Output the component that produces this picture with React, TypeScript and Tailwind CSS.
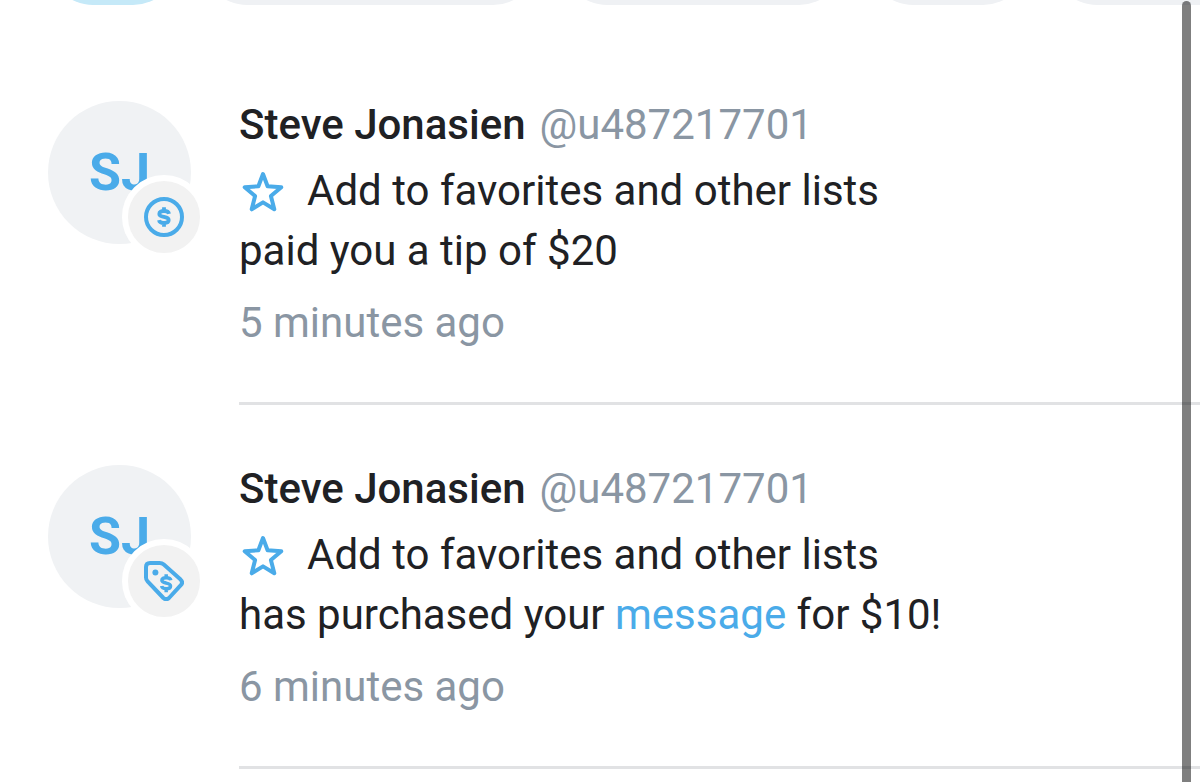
import { ReactNode } from 'react'

interface NotificationProps {
    id: number;
    name: string;
    user: string;
    initials: string;
    icon: ReactNode;
    message: ReactNode;
    time: string;
}

const filters = ['w-[130px] bg-[#c5e9f8]', 'w-[336px] bg-[#eff1f4]', 'w-[282px] bg-[#eff1f4]', 'w-[160px] bg-[#eff1f4]', 'w-[240px] bg-[#eff1f4]']

const dollarPath = 'M5 -3.2C4.6 -5.4 2.6 -6 0 -6C-2.8 -6 -4.7 -5 -4.7 -3.1C-4.7 -1 -2.5 -.6 0 -.1C2.5 .4 4.7 .9 4.7 3C4.7 5 2.8 6 0 6C-2.6 6 -4.6 5.3 -5 3.1M0 -9.8V-6M0 6V9.8'

function TipIcon() {
    return (
        <svg className="size-10" viewBox="0 0 40 40" fill="none" stroke="#4aabe9" aria-hidden="true">
            <circle cx="20" cy="20" r="18" strokeWidth="4" />
            <path d={dollarPath} transform="translate(20 20)" strokeWidth="3.8" />
        </svg>
    )
}

function TagIcon() {
    return (
        <svg className="size-10" viewBox="0 0 40 40" fill="none" stroke="#4aabe9" aria-hidden="true">
            <path
                d="M6 2H15.5Q18 2 19.8 3.6L36.6 18.6Q39.4 21.4 36.8 24.2L25 37Q22.2 39.4 19.4 37L3.6 20.4Q2 18.7 2 16.4V6Q2 2 6 2Z"
                strokeWidth="4"
                strokeLinejoin="round"
            />
            <circle cx="11.4" cy="11.4" r="3" fill="#4aabe9" stroke="none" />
            <path d={dollarPath} transform="translate(22.2 22.2) scale(.92)" strokeWidth="3.8" />
        </svg>
    )
}

function StarIcon() {
    return (
        <svg className="size-12 shrink-0" viewBox="0 0 48 48" fill="none" stroke="#4aabe9" strokeWidth="4" strokeLinejoin="round" aria-hidden="true">
            <path d="M24 7L28.6 19.2L42.3 20.3L31.9 29L35.3 42.3L24 35.4L12.7 42.3L16.1 29L5.7 20.3L19.4 19.2Z" />
        </svg>
    )
}

const notifications: NotificationProps[] = [
    {
        id: 1,
        name: 'Steve Jonasien',
        user: '@u487217701',
        initials: 'SJ',
        icon: <TipIcon />,
        message: 'paid you a tip of $20',
        time: '5 minutes ago',
    },
    {
        id: 2,
        name: 'Steve Jonasien',
        user: '@u487217701',
        initials: 'SJ',
        icon: <TagIcon />,
        message: <>has purchased your <a href="#message" className="text-[#4aabe9]">message</a> for $10!</>,
        time: '6 minutes ago',
    },
]

function Notification({ item }: { item: NotificationProps }) {
    return (
        <article className="flex gap-12 pl-12">
            <div className="relative mt-[60px] flex size-[143px] shrink-0 items-center justify-center rounded-full bg-[#f0f2f4]">
                <span className="text-[52px] leading-none font-bold text-[#4aabe9]">{item.initials}</span>
                <div className="absolute -right-[15px] -bottom-[15px] flex size-[84px] items-center justify-center rounded-full border-6 border-white bg-[#f2f2f2]">
                    {item.icon}
                </div>
            </div>

            <div className="min-w-0 flex-1 border-b-3 border-[#e1e2e4] pt-[54px] pb-[49px]">
                <div className="mb-1.5 flex flex-wrap gap-x-3.5">
                    <a href="#profile" className="font-medium text-[#202124]">{item.name}</a>
                    <span className="text-[#8a96a3]">{item.user}</span>
                </div>
                <button type="button" className="flex cursor-pointer items-center gap-5 text-left">
                    <StarIcon />
                    Add to favorites and other lists
                </button>
                <p>{item.message}</p>
                <p className="mt-3 text-[#8a96a3]">{item.time}</p>
            </div>
        </article>
    )
}

export default function App() {
    return (
        <div className="overflow-x-hidden bg-white font-[Roboto,sans-serif] text-[42px] leading-[60px] text-[#202124]">
            <nav className="flex h-[5px] items-end gap-6 overflow-hidden pl-12">
                {filters.map((style, index) => (
                    <button key={index} type="button" className={`h-[90px] shrink-0 rounded-full ${style}`} />
                ))}
            </nav>

            <main className="mt-9">
                {notifications.map((item) => (
                    <Notification key={item.id} item={item} />
                ))}
            </main>

            {/* scroll thumb */}
            <div className="fixed top-px right-[9px] -bottom-2 w-[9px] rounded-full bg-black/50" />
        </div>
    )
}
